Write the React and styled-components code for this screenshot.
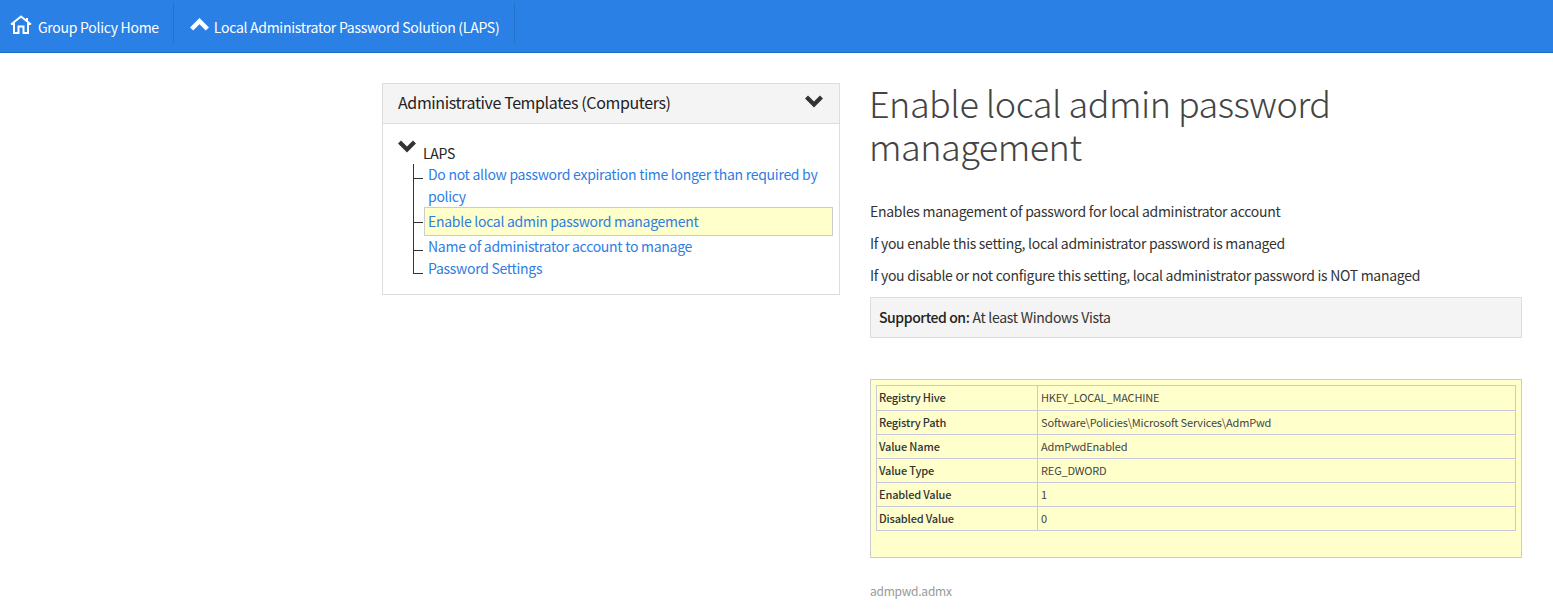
import React from "react";
import styled, { createGlobalStyle } from "styled-components";

const Global = createGlobalStyle`
  html, body { margin: 0; padding: 0; background: #fff; }
  body { font-family: "Noto Sans CJK JP", "Noto Sans", sans-serif; font-size: 14px; letter-spacing: -0.02em; color: #333; line-height: 22px; }
  * { box-sizing: border-box; }
`;
const Nav = styled.nav`
  height: 53px; background: #2a80e4; border-bottom: 1px solid #1b6cc4; display: flex; align-items: stretch; padding-top: 3px; padding-bottom: 9px;
`;
const NavItem = styled.a`
  display: flex; align-items: center; gap: ${p => p.$gap}px; color: #fff; padding: 0 ${p => p.$right}px 0 ${p => p.$left}px;
  border-right: 1px solid #2271cc; white-space: nowrap; height: 40px;
`;
const NavLabel = styled.span`display: inline-block; padding-top: 8px;`;
const HomeIcon = styled.svg`margin-top: 3px; flex: none;`;
const UpIcon = styled.span`display: flex; margin-top: 4px;`;
const Main = styled.main`
  display: grid; grid-template-columns: 458px 652px; column-gap: 30px; padding: 30px 0 0 382px;
`;
const Panel = styled.section`
  border: 1px solid #ddd; height: 212px; align-self: start;
`;
const PanelHead = styled.header`
  height: 40px; background: #f4f4f4; border-bottom: 1px solid #ddd; display: flex; align-items: center; justify-content: space-between;
  padding: 0 16px 4px 15px; font-size: 16px; letter-spacing: -0.024em; color: #222;
`;
const PanelBody = styled.div`
  padding: 16px 6px 0 15px;
`;
const TreeRoot = styled.div`
  display: flex; align-items: flex-start; gap: 7px; height: 24px; color: #222;
`;
const RootLabel = styled.span`padding-top: 2px;`;
const Tree = styled.ul`
  list-style: none; margin: 0 0 0 15px; padding: 0; position: relative;
`;
const Item = styled.li`
  display: flow-root; position: relative; padding-left: 11px; color: #2e7de4;
  &::before { content: ""; position: absolute; left: 0; top: ${p => p.$tick}px; width: 10px; border-top: 1px solid #333; }
  &::after { content: ""; position: absolute; left: 0; top: 0; bottom: ${p => p.$last ? "auto" : "0"}; height: ${p => p.$last ? "16px" : "auto"}; border-left: 1px solid #333; }
`;
const Link = styled.div`
  padding: 0 4px; line-height: 22px; margin: -1px 0 1px;
  ${p => p.$active ? "background:#ffffcc;border:1px solid #ccc;padding:3px 3px;height:29px;margin:-1px 0 0 0;line-height:21px;" : ""}
`;
const Content = styled.article`min-width: 0;`;
const Title = styled.h1`
  font-size: 36px; line-height: 43px; font-weight: 300; margin: -2px 0 33px -1px; color: #444; letter-spacing: -0.014em;
`;
const Para = styled.p`margin: 0 0 10px; line-height: 22px; &:last-of-type { margin-bottom: 11px; }`;
const Support = styled.div`
  height: 41px; background: #f4f4f4; border: 1px solid #ddd; padding: 0 9px 2px 8px; display: flex; align-items: center; gap: 3px;
`;
const SupportLabel = styled.strong`font-weight: 500; letter-spacing: -0.03em; color: #222;`;
const YellowBox = styled.div`
  margin-top: 41px; height: 179px; background: #ffffcc; border: 1px solid #ccc; padding: 5px;
`;
const Table = styled.table`
  width: 100%; border-collapse: collapse; font-size: 11px; letter-spacing: -0.015em;
`;
const Row = styled.tr`height: ${p => p.$h}px;`;
const Th = styled.th`
  width: 161px; text-align: left; font-weight: 500; border: 1px solid #c8c8d8; padding: 0 2px 2px; line-height: 16px; color: #333;
`;
const Td = styled.td`border: 1px solid #c8c8d8; padding: 0 3px 2px; line-height: 16px; color: #444;`;
const File = styled.div`margin-top: 22px; color: #999; font-size: 12px; letter-spacing: -0.02em;`;

const Chevron = ({ up, size = 18, color = "#333" }) => (
  <svg width={size} height={size * 0.72} viewBox="0 0 18 13" aria-hidden="true">
    <path d={up ? "M0 9 L9 0 L18 9 L15 12 L9 6 L3 12 Z" : "M0 3.5 L3 0.5 L9 6.5 L15 0.5 L18 3.5 L9 12.5 Z"} fill={color} />
  </svg>
);
const Home = () => (
  <HomeIcon width="22" height="20" viewBox="0 0 22 20" fill="none" stroke="#fff" strokeWidth="2" aria-hidden="true">
    <path d="M1 9.5 L11 1.5 L21 9.5 M4 8 V18 H8.5 V11.5 H13.5 V18 H18 V8 M17 3 V6" />
  </HomeIcon>
);

const rows = [
  ["Registry Hive", "HKEY_LOCAL_MACHINE", 25],
  ["Registry Path", "Software\\Policies\\Microsoft Services\\AdmPwd", 24],
  ["Value Name", "AdmPwdEnabled", 24],
  ["Value Type", "REG_DWORD", 24],
  ["Enabled Value", "1", 24],
  ["Disabled Value", "0", 24],
];

export default function App() {
  return (
    <>
      <Global />
      <Nav>
        <NavItem $left={10} $right={14} $gap={6}><Home /><NavLabel>Group Policy Home</NavLabel></NavItem>
        <NavItem $left={16} $right={15} $gap={5}><UpIcon><Chevron up size={19} color="#fff" /></UpIcon><NavLabel>Local Administrator Password Solution (LAPS)</NavLabel></NavItem>
      </Nav>
      <Main>
        <Panel>
          <PanelHead>Administrative Templates (Computers)<Chevron /></PanelHead>
          <PanelBody>
            <TreeRoot><Chevron /><RootLabel>LAPS</RootLabel></TreeRoot>
            <Tree>
              <Item $tick={14}><Link>Do not allow password expiration time longer than required by policy</Link></Item>
              <Item $tick={14}><Link $active>Enable local admin password management</Link></Item>
              <Item $tick={14}><Link>Name of administrator account to manage</Link></Item>
              <Item $tick={15} $last><Link>Password Settings</Link></Item>
            </Tree>
          </PanelBody>
        </Panel>
        <Content>
          <Title>Enable local admin password management</Title>
          <Para>Enables management of password for local administrator account</Para>
          <Para>If you enable this setting, local administrator password is managed</Para>
          <Para>If you disable or not configure this setting, local administrator password is NOT managed</Para>
          <Support><SupportLabel>Supported on:</SupportLabel> At least Windows Vista</Support>
          <YellowBox>
            <Table>
              <tbody>
                {rows.map(([k, v, h]) => (
                  <Row key={k} $h={h}><Th>{k}</Th><Td>{v}</Td></Row>
                ))}
              </tbody>
            </Table>
          </YellowBox>
          <File>admpwd.admx</File>
        </Content>
      </Main>
    </>
  );
}
